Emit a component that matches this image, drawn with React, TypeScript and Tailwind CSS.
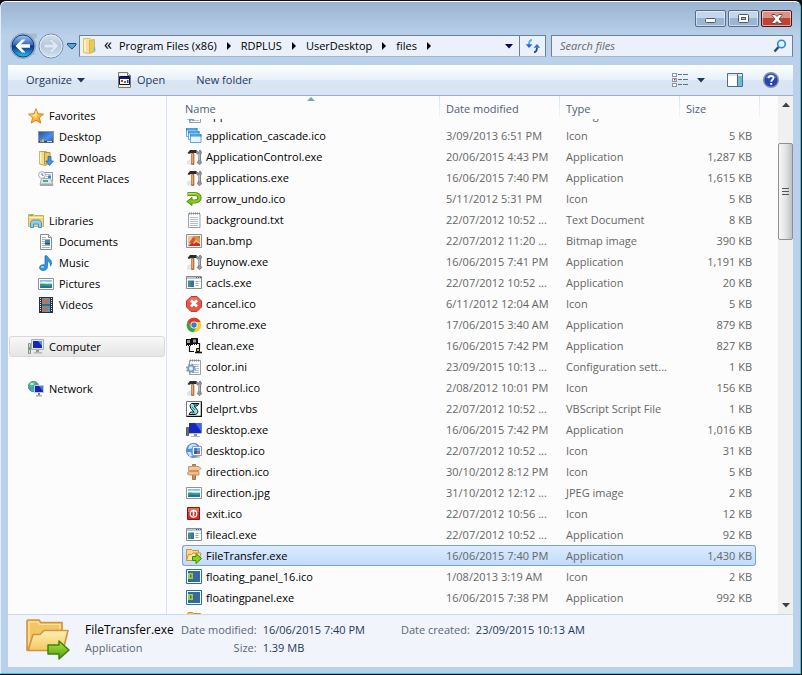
import React, { useLayoutEffect, useRef } from 'react';
import clsx from 'clsx';

function Svg({ size = 16, box = 16, children }: { size?: number; box?: number; children: React.ReactNode }) {
  return (
    <svg width={size} height={size} viewBox={`0 0 ${box} ${box}`} className="shrink-0" aria-hidden="true">
      {children}
    </svg>
  );
}

// ---- navigation pane icons ----

const StarIcon = () => (
  <Svg>
    <defs>
      <linearGradient id="star" x1="0" y1="0" x2="1" y2="1">
        <stop offset="0" stopColor="#fff3a0" />
        <stop offset="0.5" stopColor="#ffc23a" />
        <stop offset="1" stopColor="#f08a10" />
      </linearGradient>
    </defs>
    <path d="M8 .8l2 5 5.500.3-4.200 3.600 1.500 5.400L8 12.200l-4.800 2.900 1.500-5.400L.5 6.100 6 5.800z" fill="url(#star)" stroke="#e8791c" strokeLinejoin="round" />
    <path d="M8 3v7M5 7l3 1" stroke="#fff6bd" strokeWidth=".8" fill="none" />
  </Svg>
);

const DesktopIcon = () => (
  <Svg>
    <defs>
      <linearGradient id="desk" x1="0" y1="0" x2="1" y2="1">
        <stop offset="0" stopColor="#1f4ea8" />
        <stop offset="0.6" stopColor="#4d8fe6" />
        <stop offset="1" stopColor="#1c55b8" />
      </linearGradient>
    </defs>
    <rect x=".5" y="2.500" width="15" height="11" fill="url(#desk)" stroke="#8c96a4" />
    <path d="M1 12h14v1.500H1z" fill="#2a3a55" />
    <path d="M2 10h2v1.500H2z" fill="#e8502c" />
    <path d="M4 10h2v1.500H4z" fill="#7fc23c" />
    <path d="M2 11.500h2V13H2z" fill="#44b4f0" />
    <path d="M4 11.500h2V13H4z" fill="#f8c830" />
    <path d="M9 12.500h5" stroke="#c8d4e4" />
  </Svg>
);

const DownloadsIcon = () => (
  <Svg>
    <path d="M1.500 1.500h7l1 1V14l-2 1.500-6-1.500z" fill="#f5dc8a" stroke="#c8a44c" />
    <path d="M6.500 2.500h5.500V14H6.500z" fill="#eccb62" stroke="#b8923a" />
    <path d="M2.500 2.500v11" stroke="#fff4c4" strokeWidth="1.500" />
    <path d="M10 6.500h3V11h2.300l-3.800 4.500L7.700 11H10z" fill="#3f9be8" stroke="#1f68b4" strokeWidth=".8" />
  </Svg>
);

const RecentIcon = () => (
  <Svg>
    <path d="M6.500 1.500h8v9h-8z" fill="#f4f8fc" stroke="#8f9aa6" />
    <path d="M8 3.500h5M8 5.500h2" stroke="#b4c0cc" />
    <path d="M10 4.500h3v3h-3z" fill="#3e86d0" />
    <path d="M3.500 7.500h9l2.500 6H2z" fill="#e2e6ea" stroke="#a3aab0" />
    <path d="M5 9h5v2H5z" fill="#4aa884" />
    <path d="M2 12.500h13V15H2z" fill="#a3a9ae" />
    <circle cx="4" cy="4" r="3.400" fill="#fbfdff" stroke="#a5b0ba" />
    <path d="M4 2v2.200h1.700" stroke="#4c5866" strokeWidth=".8" fill="none" />
  </Svg>
);

const LibrariesIcon = () => (
  <Svg>
    <path d="M.5 3.500v-2h5l1.500 1h8.500v11H.5z" fill="#f2d67c" stroke="#cfae5a" />
    <path d="M1.500 2.500h3.500" stroke="#6db33f" />
    <path d="M1 4.500h14" stroke="#fff2b8" />
    <path d="M2.500 14.500v-5l2-2.500h7l2 2.500v5h-3v-3.500h-5v3.500z" fill="#8fd0f0" stroke="#4595c8" />
  </Svg>
);

const DocumentsIcon = () => (
  <Svg>
    <path d="M2.500.500h8l3 3v12h-11z" fill="#fff" stroke="#838c96" />
    <path d="M10.500.500v3h3" fill="#e0e6ee" stroke="#838c96" />
    <path d="M4 3.500h4M4 5.500h8M4 7.500h3M4 9.500h3M4 11.500h8M4 13.500h8" stroke="#9fb0c4" />
    <path d="M7 6h5v4.500H7z" fill="#3f7fc4" />
    <path d="M7 9h5v1.500H7z" fill="#204c7c" />
  </Svg>
);

const MusicIcon = () => (
  <Svg>
    <path d="M7 .8h2c.2 2.500 4.500 3 4.500 7.200 0 1.500-.6 2.500-1 3 .4-2.800-1.500-4.200-3-4.800v5.300c0 2.400-1.800 4-4.300 4-2.200 0-3.700-1.200-3.700-2.800 0-2.200 2.800-3.700 5.500-2.700z" fill="#2d96e0" stroke="#176cb2" strokeWidth=".7" />
    <ellipse cx="4.500" cy="12" rx="1.600" ry=".9" fill="#9bd8fa" />
  </Svg>
);

const PictureIcon = () => (
  <Svg>
    <path d="M.5 2.500h15v11H.5z" fill="#fff" stroke="#8a949e" />
    <path d="M2 4h12v8H2z" fill="#7cc4ec" />
    <path d="M2 6.500c3-2 5 0 12-1v2H2z" fill="#e4f4fc" />
    <path d="M2 8c3-1 5 1 12 0v4H2z" fill="#3f9464" />
    <path d="M2 11c4-2 7 0 12-1v2H2z" fill="#1e6db0" />
  </Svg>
);

const VideosIcon = () => (
  <Svg>
    <path d="M1 0h14v16H1z" fill="#2c3034" />
    <path d="M4 1h8v6.500H4zM4 8.500h8V15H4z" fill="#4a9ed4" />
    <path d="M5 1l3 2 3-2v4L8 7 4 4zM5 9l3 2 3-2-1 4-5 2z" fill="#d06a3c" />
    <path d="M2.500 1v14M13.500 1v14" stroke="#e4e8ea" strokeDasharray="1 1" />
  </Svg>
);

const ComputerIcon = () => (
  <Svg>
    <path d="M.5 4.500h2v10h-2z" fill="#d4d8d4" stroke="#8a9290" />
    <path d="M1.500 8v3" stroke="#58b040" />
    <path d="M3.500.500h12v10h-12z" fill="#e3e7ec" stroke="#a8aeb6" />
    <path d="M5 2h9v7H5z" fill="#1626bc" />
    <path d="M10 2h4v5z" fill="#5f8df0" />
    <path d="M8 11h3v2H8z" fill="#8d949c" />
    <path d="M6 13h8v1.500H6z" fill="#b0b6bc" />
  </Svg>
);

const NetworkIcon = () => (
  <Svg>
    <circle cx="5.500" cy="5.500" r="5.200" fill="#3f9ae4" stroke="#2468b0" strokeWidth=".6" />
    <path d="M3 1l4-.5 1 2-3 2-1 2-3-1zM2 8l3 0 1 2-1 .500zM8 3l2 1-2 1z" fill="#5cc04c" />
    <ellipse cx="4" cy="3" rx="2" ry="1" fill="#e4faff" opacity=".8" />
    <path d="M6.500 4.500h9v7h-9z" fill="#1424b4" stroke="#c4cad4" />
    <path d="M11 5h4v5z" fill="#4a76ec" />
    <path d="M10 12h2v2h-2z" fill="#7c848c" />
    <path d="M8 14h6v1.500H8z" fill="#a4acb4" />
  </Svg>
);

// ---- file icons ----

const CascadeIcon = () => (
  <Svg>
    {[[0, 0], [2, 3], [4, 6]].map(([x, y]) => (
      <g key={x} transform={`translate(${x} ${y})`}>
        <path d="M.5.500h10.500v8H.5z" fill="#eaf5fd" stroke="#62aadc" />
        <path d="M0 0h11.500v2.500H0z" fill="#2c8ed2" />
        <path d="M1 1h9" stroke="#7cc6f2" strokeWidth=".8" />
      </g>
    ))}
  </Svg>
);

const ToolsIcon = () => (
  <Svg>
    <path d="M1 12l4-2v5.500H1z" fill="#d9dadb" opacity=".7" />
    <path d="M1.500 4L4 1h6.500v3H5L3 5z" fill="#2b2c2e" />
    <path d="M5.500 4.500h2.500v11H5.500z" fill="#c98648" stroke="#935424" strokeWidth=".6" />
    <path d="M6.300 5v9" stroke="#f1c392" strokeWidth=".8" />
    <path d="M10.500 1.500l2 2 1.500-2.500 1.500 2-1 3v5l1 3-2 1.500-2-1.500 1-3V6l-2-2z" fill="#969ba1" stroke="#5d6267" strokeWidth=".7" />
    <path d="M13 5v6" stroke="#dde1e4" strokeWidth=".8" />
  </Svg>
);

const UndoIcon = () => (
  <Svg>
    <path d="M1.500 3h7.500c6 0 6 7.500 0 7.500H6" fill="none" stroke="#4c8c0c" strokeWidth="4.200" />
    <path d="M6 6.500v8L.8 10.500z" fill="#7dbd16" stroke="#4c8c0c" />
    <path d="M2 3h7c6 0 6 7.500 0 7.500H5" fill="none" stroke="#8ccb20" strokeWidth="2.400" />
    <path d="M2 2.500h8" stroke="#c3ea6c" strokeWidth=".8" />
  </Svg>
);

const TextIcon = () => (
  <Svg>
    <path d="M2.500 1.500h11l.5.500v13.500H2.500z" fill="#fbfcfd" stroke="#9aa2aa" />
    <path d="M3 1.500h11" stroke="#7f8890" strokeDasharray="1 1" strokeWidth="2" />
    <path d="M4 5.500h8M4 7.500h8M4 9.500h8M4 11.500h8M4 13.500h8" stroke="#b6bec6" />
  </Svg>
);

const BitmapIcon = () => (
  <Svg>
    <path d="M.5 1.500h15v13H.5z" fill="#f4f4f2" stroke="#8d9092" />
    <path d="M2 3h12v10H2z" fill="#e6c89c" />
    <path d="M3 10l4-6h4l-4 7z" fill="#e2502c" />
    <path d="M7 3h4l3 3v4L9 6z" fill="#f08848" />
    <path d="M2 13l4-3 2 1 2-2 4 2v2z" fill="#c4311c" />
    <path d="M11 3h3v3z" fill="#6c9c48" />
  </Svg>
);

const ConsoleIcon = () => (
  <Svg>
    <path d="M.5 1.500h15v12H.5z" fill="#fdfdfd" stroke="#868d94" />
    <path d="M1 2h14v2H1z" fill="#bcc6d0" />
    <path d="M10 2.500h1m1 0h1m1 0h1" stroke="#3c5f9c" />
    <path d="M2 5.500h3V12H2z" fill="#3f9478" />
    <path d="M5 5.500h3V12H5z" fill="#3b70a8" />
    <path d="M9.500 6.500h3M9.500 8.500h3M9.500 10.500h3M13.500 6.500h1" stroke="#9ca6b0" />
  </Svg>
);

const CancelIcon = () => (
  <Svg>
    <path d="M5 .500h6L15.500 5v6L11 15.500H5L.5 11V5z" fill="#e4574a" stroke="#c43a30" />
    <path d="M5.500 1.500h5l3.500 4H2z" fill="#f0887a" opacity=".6" />
    <path d="M5 4.500l6 6M11 4.500l-6 6" stroke="#fff" strokeWidth="2.600" />
  </Svg>
);

const ChromeIcon = () => (
  <Svg>
    <circle cx="8" cy="8" r="7.300" fill="#f7cf2d" />
    <path d="M1.700 4.300A7.300 7.300 0 0 1 14.600 5H8L5 9.500z" fill="#dc3b2c" />
    <path d="M1.700 4.300A7.300 7.300 0 0 0 7.500 15.300L10.800 9.700 8 11.300 5 9.700z" fill="#34a24a" />
    <circle cx="8" cy="8" r="3.500" fill="#fff" />
    <circle cx="8" cy="8" r="2.700" fill="#3c79d4" />
  </Svg>
);

const CleanIcon = () => (
  <Svg>
    <path d="M0 1h6v6H0zM5 0h7v6H5z" fill="#111" />
    <path d="M1 2h3v3H1zM7 1.500h3v3H7z" fill="#9a9a90" />
    <path d="M3.500 8v5.500H8M11 5.500h2.500V11" fill="none" stroke="#111" strokeWidth="1.200" />
    <path d="M0 7.500h6M6 6.500h6" stroke="#111" strokeDasharray="1 1" />
    <path d="M10.500 10.500h3v3h-3z" fill="#c8b424" stroke="#111" />
    <path d="M9 14.500h7" stroke="#111" strokeWidth="1.600" />
  </Svg>
);

const IniIcon = () => (
  <Svg>
    <path d="M3.500 1.500h11v14h-11z" fill="#fbfcfd" stroke="#98a0a8" />
    <path d="M4 1.500h10" stroke="#7f8890" strokeDasharray="1 1" strokeWidth="2" />
    <path d="M6 5.500h7M9 7.500h4M10 9.500h3M9 11.500h4M6 13.500h7" stroke="#b9c1c8" />
    <circle cx="5" cy="9.500" r="3" fill="#cfe2f2" stroke="#7696b4" strokeWidth="1.600" />
    <circle cx="5" cy="9.500" r="4.300" fill="none" stroke="#7696b4" strokeWidth="1.400" strokeDasharray="1.700 1.670" />
    <circle cx="5" cy="9.500" r="1" fill="#fff" />
  </Svg>
);

const ScriptIcon = () => (
  <Svg>
    <path d="M.5.500h15v15H.5z" fill="#fff" stroke="#777" />
    <path d="M.5 15.500h15V.5" stroke="#111" strokeWidth="1.500" fill="none" />
    <path d="M5.500 2.500h7.500L11 5H8l3 3.500c2 2.500 0 5-2 5H3l1.500-2.500H8L5 7.500c-1.500-2-1-4 .5-5z" fill="#8de2e4" stroke="#111" />
    <path d="M7 3.500h4M6 6l3 3M6 12h3" stroke="#128e98" />
  </Svg>
);

const MonitorIcon = () => (
  <Svg>
    <path d="M.5 5.500h2v8h-2z" fill="#666c72" stroke="#555c62" />
    <path d="M3 1h12.500v10H3z" fill="#1428bc" />
    <path d="M9 1h6.500v9z" fill="#3e64ea" />
    <path d="M3 11h12.500v1H3z" fill="#b4bcc8" />
    <path d="M8 12h3v2H8z" fill="#8a9098" />
    <path d="M5 14h9v1H5z" fill="#acb2b8" />
  </Svg>
);

const DesktopGlobeIcon = () => (
  <Svg>
    <circle cx="7.500" cy="7.500" r="7.200" fill="#4d90e6" stroke="#3a72c8" strokeWidth=".6" />
    <path d="M3 3c3-3 7-2 8 0-2 1-6 3-9 3zM1 9h4l1 4-2 1z" fill="#cbe6ff" />
    <path d="M6.500 3.500h9v9h-9z" fill="#fff" stroke="#7ba0cc" />
    <path d="M8 5h3v3H8z" fill="#3a80d4" />
    <path d="M11 5h3v3h-3z" fill="#62a8ee" />
    <path d="M11 8h3v3h-3z" fill="#e35438" />
    <path d="M8 8h3v3H8z" fill="#2460b4" />
    <path d="M8 14h6" stroke="#8ca0b8" />
  </Svg>
);

const SignpostIcon = () => (
  <Svg>
    <path d="M6.500.500h3v15h-3z" fill="#c98f5c" stroke="#94603a" strokeWidth=".8" />
    <path d="M2.500 2.500H13l2 2-2 2H2.500z" fill="#f3c79a" stroke="#c99464" />
    <path d="M3 7.500h10v3.500H3L1 9.250z" fill="#efbb88" stroke="#c99464" />
  </Svg>
);

const ExitIcon = () => (
  <Svg>
    <path d="M1.500 1.500h12v12h-12z" fill="#d42a20" stroke="#8e1410" />
    <path d="M2 2h11v4H2z" fill="#ea6a54" />
    <circle cx="7.500" cy="7.800" r="3.300" fill="none" stroke="#fff" strokeWidth="1.300" />
    <path d="M7.500 5v5" stroke="#fff" strokeWidth="1.600" />
  </Svg>
);

const TransferIcon = () => (
  <Svg>
    <path d="M.5 12.500V1.500h5l1 1h6v3" fill="#f6d688" stroke="#cb9440" />
    <path d="M.5 12.500l2-6h3l1.500-1.500h8l-2 7.500z" fill="#fbe6a4" stroke="#cb9440" />
    <path d="M6.500 8.500h3.500v-3l5.500 5-5.500 5v-3H6.500z" fill="#8cd020" stroke="#3e8a08" />
  </Svg>
);

const TransferLargeIcon = () => (
  <Svg size={44} box={44}>
    <defs>
      <linearGradient id="fold" x1="0" y1="0" x2="0" y2="1">
        <stop offset="0" stopColor="#fdf0b4" />
        <stop offset="1" stopColor="#f2c860" />
      </linearGradient>
      <linearGradient id="garrow" x1="0" y1="0" x2="0" y2="1">
        <stop offset="0" stopColor="#b4e440" />
        <stop offset="1" stopColor="#4c9c0c" />
      </linearGradient>
    </defs>
    <path d="M1 31V2q0-1 1-1h11l2 2.500h21V31z" fill="#f3c564" stroke="#cf9440" strokeWidth="1.600" />
    <path d="M3 29V3h9l2 2.500h20V10" fill="none" stroke="#fde7a8" strokeWidth="1.200" />
    <path d="M2 31.500L7 15.500h7l4-4h24l-5 20z" fill="url(#fold)" stroke="#cf9440" strokeWidth="1.600" strokeLinejoin="round" />
    <path d="M22 26h11v-4l10 9-10 9v-5H22z" fill="url(#garrow)" stroke="#3e8208" strokeWidth="1.500" strokeLinejoin="round" />
  </Svg>
);

const PanelIcon = () => (
  <Svg>
    <path d="M.5.500h15v14H.5z" fill="#fff" stroke="#1678b0" />
    <path d="M2 2h12v11H2z" fill="#3868a4" />
    <path d="M2 4h5v6H2z" fill="#a4cf3c" />
    <path d="M4 5.500h1.500v3H4z" fill="#4c7c20" />
  </Svg>
);

const FolderIcon = () => (
  <Svg>
    <path d="M1.500 14.500v-12l1-1h4l1 1h7v12z" fill="#f0c434" stroke="#c0962c" />
    <path d="M2 4.500h12" stroke="#fff0a4" />
  </Svg>
);

const FolderSideIcon = () => (
  <Svg>
    <path d="M1.500.500h6.500l1.500 1V14l-3 1.500-5-1z" fill="#f7e096" stroke="#dcc070" />
    <path d="M7.500 2.500l5-1v12l-5 2z" fill="#ecc95c" stroke="#d8b456" />
    <path d="M3 1.500v12" stroke="#fff9d8" strokeWidth="1.400" />
    <path d="M12.500 9.500v4" stroke="#6cb8e8" strokeWidth="1.600" />
  </Svg>
);

const OpenAppIcon = () => (
  <Svg>
    <path d="M1.500.500h9l3 3v12h-12z" fill="#f3f1e6" stroke="#777" />
    <path d="M10.500.500v3h3" fill="#fff" stroke="#777" />
    <path d="M2.500 4.500h10v8h-10z" fill="#fff" stroke="#111" />
    <path d="M3 5h9v2H3z" fill="#1414a4" />
    <path d="M4 8h2v2H4z" fill="#d83020" />
    <path d="M7 9h2v2H7z" fill="#20a030" />
    <path d="M10 8h1.500v3H10z" fill="#2440c8" />
  </Svg>
);

function Caret({ className }: { className?: string }) {
  return (
    <svg width="8" height="5" viewBox="0 0 8 5" className={clsx('shrink-0', className)} aria-hidden="true">
      <path d="M0 0h8L4 4.500z" fill="currentColor" />
    </svg>
  );
}

function CrumbArrow() {
  return (
    <svg width="6" height="8" viewBox="0 0 6 8" className="shrink-0" aria-hidden="true">
      <path d="M1 0l4 4-4 4z" fill="#000" />
    </svg>
  );
}

// ---- data ----

type FileRow = {
  name: string;
  date: string;
  type: string;
  size: string;
  icon: React.ComponentType;
};

const SELECTED = 'FileTransfer.exe';

const files: FileRow[] = [
  { name: 'App.ini', date: '22/07/2012 10:52 ...', type: 'Configuration sett...', size: '1 KB', icon: IniIcon },
  { name: 'application_cascade.ico', date: '3/09/2013 6:51 PM', type: 'Icon', size: '5 KB', icon: CascadeIcon },
  { name: 'ApplicationControl.exe', date: '20/06/2015 4:43 PM', type: 'Application', size: '1,287 KB', icon: ToolsIcon },
  { name: 'applications.exe', date: '16/06/2015 7:40 PM', type: 'Application', size: '1,615 KB', icon: ToolsIcon },
  { name: 'arrow_undo.ico', date: '5/11/2012 5:31 PM', type: 'Icon', size: '5 KB', icon: UndoIcon },
  { name: 'background.txt', date: '22/07/2012 10:52 ...', type: 'Text Document', size: '8 KB', icon: TextIcon },
  { name: 'ban.bmp', date: '22/07/2012 11:20 ...', type: 'Bitmap image', size: '390 KB', icon: BitmapIcon },
  { name: 'Buynow.exe', date: '16/06/2015 7:41 PM', type: 'Application', size: '1,191 KB', icon: ToolsIcon },
  { name: 'cacls.exe', date: '22/07/2012 10:52 ...', type: 'Application', size: '20 KB', icon: ConsoleIcon },
  { name: 'cancel.ico', date: '6/11/2012 12:04 AM', type: 'Icon', size: '5 KB', icon: CancelIcon },
  { name: 'chrome.exe', date: '17/06/2015 3:40 AM', type: 'Application', size: '879 KB', icon: ChromeIcon },
  { name: 'clean.exe', date: '16/06/2015 7:42 PM', type: 'Application', size: '827 KB', icon: CleanIcon },
  { name: 'color.ini', date: '23/09/2015 10:13 ...', type: 'Configuration sett...', size: '1 KB', icon: IniIcon },
  { name: 'control.ico', date: '2/08/2012 10:01 PM', type: 'Icon', size: '156 KB', icon: ToolsIcon },
  { name: 'delprt.vbs', date: '22/07/2012 10:52 ...', type: 'VBScript Script File', size: '1 KB', icon: ScriptIcon },
  { name: 'desktop.exe', date: '16/06/2015 7:42 PM', type: 'Application', size: '1,016 KB', icon: MonitorIcon },
  { name: 'desktop.ico', date: '22/07/2012 10:52 ...', type: 'Icon', size: '31 KB', icon: DesktopGlobeIcon },
  { name: 'direction.ico', date: '30/10/2012 8:12 PM', type: 'Icon', size: '5 KB', icon: SignpostIcon },
  { name: 'direction.jpg', date: '31/10/2012 12:12 ...', type: 'JPEG image', size: '2 KB', icon: PictureIcon },
  { name: 'exit.ico', date: '22/07/2012 10:56 ...', type: 'Icon', size: '12 KB', icon: ExitIcon },
  { name: 'fileacl.exe', date: '22/07/2012 10:52 ...', type: 'Application', size: '92 KB', icon: ConsoleIcon },
  { name: 'FileTransfer.exe', date: '16/06/2015 7:40 PM', type: 'Application', size: '1,430 KB', icon: TransferIcon },
  { name: 'floating_panel_16.ico', date: '1/08/2013 3:19 AM', type: 'Icon', size: '2 KB', icon: PanelIcon },
  { name: 'floatingpanel.exe', date: '16/06/2015 7:38 PM', type: 'Application', size: '992 KB', icon: PanelIcon },
  { name: 'folder.ico', date: '22/07/2012 10:52 ...', type: 'Icon', size: '5 KB', icon: FolderIcon },
];

type NavGroup = {
  label: string;
  icon: React.ComponentType;
  active?: boolean;
  items?: { label: string; icon: React.ComponentType }[];
};

const navGroups: NavGroup[] = [
  {
    label: 'Favorites',
    icon: StarIcon,
    items: [
      { label: 'Desktop', icon: DesktopIcon },
      { label: 'Downloads', icon: DownloadsIcon },
      { label: 'Recent Places', icon: RecentIcon },
    ],
  },
  {
    label: 'Libraries',
    icon: LibrariesIcon,
    items: [
      { label: 'Documents', icon: DocumentsIcon },
      { label: 'Music', icon: MusicIcon },
      { label: 'Pictures', icon: PictureIcon },
      { label: 'Videos', icon: VideosIcon },
    ],
  },
  { label: 'Computer', icon: ComputerIcon, active: true },
  { label: 'Network', icon: NetworkIcon },
];

const crumbs = ['Program Files (x86)', 'RDPLUS', 'UserDesktop', 'files'];

// ---- window parts ----

function TitleBar() {
  const base = 'flex h-[17px] w-[31px] items-center justify-center rounded-[2px] border shadow-[inset_0_0_0_1px_rgba(255,255,255,0.5)]';
  const blue = 'border-[#586c88] bg-linear-to-b from-[#c3d6eb] from-50% to-[#9bb6d3] to-50%';
  return (
    <div className="flex h-[31px] shrink-0 items-start justify-end gap-[2px] pt-2 pr-px">
      <button aria-label="Minimize" className={clsx(base, blue)}>
        <svg width="12" height="6" viewBox="0 0 12 6" className="mt-1">
          <rect x=".5" y=".5" width="10" height="4" rx="1" fill="#fff" stroke="#535666" />
        </svg>
      </button>
      <button aria-label="Maximize" className={clsx(base, blue)}>
        <svg width="12" height="10" viewBox="0 0 12 10">
          <rect x=".5" y=".5" width="10" height="8" rx="1" fill="#fff" stroke="#535666" />
          <rect x="3.500" y="3.500" width="4" height="2" fill="#a8c0dc" stroke="#535666" />
        </svg>
      </button>
      <button aria-label="Close" className={clsx(base, 'border-[#4c1520] bg-linear-to-b from-[#dd9184] from-50% to-[#bd4430] to-50%')}>
        <svg width="12" height="10" viewBox="0 0 12 10">
          <path d="M1 .500h3l2 2 2-2h3v1L8 5l3 3.500v1H8l-2-2-2 2H1v-1L4 5 1 1.500z" fill="#fff" stroke="#58505c" />
        </svg>
      </button>
    </div>
  );
}

function NavButtons() {
  return (
    <div className="flex items-center pl-px">
      <button aria-label="Back">
        <svg width="28" height="26" viewBox="0 0 28 26">
          <defs>
            <linearGradient id="back" x1="0" y1="0" x2="0" y2="1">
              <stop offset="0" stopColor="#a4c4ec" />
              <stop offset="0.45" stopColor="#3068bc" />
              <stop offset="0.5" stopColor="#06318c" />
              <stop offset="1" stopColor="#2ac0f0" />
            </linearGradient>
          </defs>
          <path d="M14 .500h14v4q-3 1-3 4v9q0 3 3 4H14z" fill="#a6bcd6" />
          <circle cx="14" cy="13" r="12.500" fill="#a3b9d3" stroke="#8da4bf" />
          <circle cx="14" cy="13" r="11" fill="url(#back)" stroke="#163c7c" />
          <path d="M6.500 13l6.500-6.500h3.500L12 11.200h9v3.600h-9l4.500 4.700H13z" fill="#fff" />
        </svg>
      </button>
      <button aria-label="Forward">
        <svg width="28" height="26" viewBox="0 0 28 26">
          <defs>
            <linearGradient id="fwd" x1="0" y1="0" x2="0" y2="1">
              <stop offset="0" stopColor="#d5e0ec" />
              <stop offset="0.5" stopColor="#b4c7dc" />
              <stop offset="1" stopColor="#d4e4f4" />
            </linearGradient>
          </defs>
          <circle cx="14" cy="13" r="12" fill="url(#fwd)" stroke="#7388a2" />
          <circle cx="14" cy="13" r="11" fill="none" stroke="#e4edf6" />
          <path d="M21.500 13L15 6.500h-3.500l4.500 4.700H7v3.600h9l-4.500 4.700H15z" fill="#dfe9f3" stroke="#b4c4d6" strokeWidth=".6" />
        </svg>
      </button>
      <button aria-label="Recent pages" className="ml-[2px]">
        <svg width="10" height="7" viewBox="0 0 10 7">
          <path d="M.5.500h8.500v1.500l-4 4-4.500-4z" fill="#5ba4d8" stroke="#1c4a80" />
        </svg>
      </button>
    </div>
  );
}

function AddressRow() {
  return (
    <div className="flex h-8 shrink-0 items-start gap-[5px]">
      <div className="flex h-[26px] w-[66px] shrink-0 items-center">
        <NavButtons />
      </div>
      <div className="mt-[2px] flex h-[22px] min-w-0 flex-1 items-stretch border border-[#6f7f93] border-b-[#a6b6c8] bg-[#eaf1fa]">
        <div className="flex min-w-0 flex-1 items-center pl-[2px]">
          <FolderSideIcon />
          <button aria-label="Show hidden folders" className="ml-[2px] h-5 w-4 pb-1 text-base leading-none">«</button>
          {crumbs.map((crumb) => (
            <span key={crumb} className="flex items-center">
              <button className="whitespace-nowrap px-[3px]">{crumb}</button>
              <span className="flex w-[18px] justify-center">
                <CrumbArrow />
              </span>
            </span>
          ))}
          <button aria-label="Previous locations" className="mr-[6px] ml-auto text-[#00005c]">
            <Caret />
          </button>
        </div>
        <button aria-label="Refresh" className="flex w-[26px] items-center justify-center border-l border-[#6f7f93]">
          <svg width="16" height="16" viewBox="0 0 16 16">
            <path d="M7 1.800C4.500 2 4 4 4 6.500" fill="none" stroke="#42b0e8" strokeWidth="1.800" />
            <path d="M.8 6.300h6.600L4 10z" fill="#2468c4" />
            <path d="M9 14.200c2.500-.2 3-2.200 3-4.700" fill="none" stroke="#284890" strokeWidth="1.800" />
            <path d="M8.600 9.700h6.600L12 6z" fill="#2c74cc" />
          </svg>
        </button>
      </div>
      <label className="mt-[2px] flex h-[22px] w-[242px] items-center border border-[#6f7f93] border-b-[#a6b6c8] bg-[#eaf1fa] pr-[5px] pl-2">
        <input
          type="text"
          aria-label="Search files"
          placeholder="Search files"
          className="min-w-0 flex-1 bg-transparent italic outline-none placeholder:text-[#666]"
        />
        <svg width="14" height="14" viewBox="0 0 14 14" className="shrink-0">
          <path d="M1.500 12.500l4-4.500" stroke="#214a88" strokeWidth="2.400" />
          <circle cx="8.500" cy="5" r="3.800" fill="#e2f1fc" stroke="#3288cc" strokeWidth="1.600" />
        </svg>
      </label>
    </div>
  );
}

function Toolbar() {
  return (
    <div className="flex h-[31px] shrink-0 items-center border-b border-b-[#9faed0] bg-linear-to-b from-[#fdfeff] via-[#e6f0fa] via-50% to-[#dae5f4] to-52% pr-[14px] pl-[18px] text-[#1e395b]">
      <button className="flex items-center gap-[5px]">
        Organize
        <Caret />
      </button>
      <button className="ml-8 flex items-center gap-1">
        <OpenAppIcon />
        Open
      </button>
      <button className="ml-[31px]">New folder</button>
      <button aria-label="Change your view" className="ml-auto flex items-center gap-[9px]">
        <svg width="16" height="14" viewBox="0 0 16 14">
          {[0, 5, 10].map((y) => (
            <g key={y}>
              <rect x=".5" y={y + 0.5} width="4" height="3" fill="#fff" stroke="#8a97a8" />
              <path d={`M6 ${y + 1.5}h4M11 ${y + 1.5}h5`} stroke="#5c6f8a" />
            </g>
          ))}
          <path d="M2 6h1.500v1.500H2z" fill="#d83830" />
        </svg>
        <Caret />
      </button>
      <button aria-label="Show the preview pane" className="ml-[22px]">
        <svg width="16" height="14" viewBox="0 0 16 14">
          <path d="M.5.500h15v13H.5z" fill="#fff" stroke="#4c6c90" />
          <path d="M1 1h14v2H1z" fill="#dbe6f0" />
          <path d="M10 3h5v10h-5z" fill="#70bcd8" />
          <path d="M10.500 1v12" stroke="#4c6c90" />
        </svg>
      </button>
      <button aria-label="Get help" className="ml-5">
        <svg width="16" height="16" viewBox="0 0 16 16">
          <circle cx="8" cy="8" r="7.300" fill="#2746b4" stroke="#8690a4" strokeWidth="1.400" />
          <path d="M2.500 6a6 6 0 0 1 11 0z" fill="#6f92e0" opacity=".7" />
          <path d="M5.500 6.200C5.500 3 10.500 3.200 10.500 6c0 1.700-2.300 1.800-2.300 3.700" fill="none" stroke="#fff" strokeWidth="1.700" />
          <path d="M7.200 11h2v1.800h-2z" fill="#fff" />
        </svg>
      </button>
    </div>
  );
}

function NavPane() {
  return (
    <nav className="flex w-[159px] shrink-0 flex-col gap-[21px] border-r border-[#d6e5f5] bg-[#fcfcfc] px-px pt-[9px]">
      {navGroups.map(({ label, icon: Icon, active, items }) => (
        <div key={label}>
          <a
            href="#"
            className={clsx(
              'flex h-[21px] items-center gap-[5px] rounded-[3px] border pl-[18px]',
              active ? 'border-[#d9d9d9] bg-linear-to-b from-[#f8f8f8] to-[#e5e5e5]' : 'border-transparent',
            )}
          >
            <Icon />
            {label}
          </a>
          {items?.map(({ label: itemLabel, icon: ItemIcon }) => (
            <a key={itemLabel} href="#" className="flex h-[21px] items-center gap-[5px] pl-[29px]">
              <ItemIcon />
              {itemLabel}
            </a>
          ))}
        </div>
      ))}
    </nav>
  );
}

function FileList() {
  const listRef = useRef<HTMLDivElement>(null);

  // the list opens a little way down, so the first row is tucked under the header
  useLayoutEffect(() => {
    if (listRef.current) listRef.current.scrollTop = 15;
  }, []);

  const head = 'sticky top-0 z-10 h-[23px] bg-[#fcfcfc] p-0 pt-[3px] text-left font-normal text-[#4c607a]';
  const divider = 'absolute top-0 h-[22px] w-px bg-linear-to-b from-[#d5e4f3] to-[#f4f8fc]';

  return (
    <div ref={listRef} className="min-w-0 flex-1 overflow-hidden bg-[#fcfcfc] pl-[15px]">
      <table className="w-full table-fixed border-separate border-spacing-0 whitespace-nowrap">
        <colgroup>
          <col />
          <col className="w-[120px]" />
          <col className="w-[120px]" />
          <col className="w-[77px]" />
          <col className="w-[22px]" />
        </colgroup>
        <thead>
          <tr>
            <th className={head}>
              <svg width="8" height="4" viewBox="0 0 8 4" className="absolute top-px left-1/2 -translate-x-1/2">
                <path d="M0 4l4-4 4 4z" fill="#6fa6c4" />
              </svg>
              <span className="pl-[3px]">Name</span>
            </th>
            {['Date modified', 'Type', 'Size'].map((title) => (
              <th key={title} className={head}>
                <span className={clsx(divider, 'left-0')} />
                <span className="pl-[7px]">{title}</span>
              </th>
            ))}
            <td className={head}>
              <span className={clsx(divider, 'left-[3px]')} />
            </td>
          </tr>
        </thead>
        <tbody>
          {files.map(({ name, date, type, size, icon: Icon }) => {
            const cell = clsx(
              'h-[21px] overflow-hidden p-0',
              name === SELECTED && 'border-y border-[#7da2ce] bg-linear-to-b from-[#dcebfc] to-[#c1dbfc]',
            );
            return (
              <tr key={name} className="text-[#666]">
                <td className={clsx(cell, 'text-black', name === SELECTED ? 'rounded-l-[3px] border-l pl-[3px]' : 'pl-1')}>
                  <span className="flex items-center gap-1">
                    <Icon />
                    <span>{name}</span>
                  </span>
                </td>
                <td className={clsx(cell, 'pl-[7px]')}>{date}</td>
                <td className={clsx(cell, 'pl-[7px]')}>{type}</td>
                <td className={clsx(cell, 'text-right', name === SELECTED ? 'rounded-r-[3px] border-r pr-[3px]' : 'pr-1')}>
                  {size}
                </td>
              </tr>
            );
          })}
        </tbody>
      </table>
    </div>
  );
}

function Scrollbar() {
  return (
    <div className="flex w-[15px] shrink-0 flex-col bg-[#f0f0f0]">
      <button aria-label="Scroll up" className="flex h-[17px] items-center justify-center text-[#404040]">
        <Caret className="rotate-180" />
      </button>
      <div className="mt-[30px] flex h-[97px] flex-col items-center justify-center gap-[2px] rounded-[2px] border border-[#8f8f8f] bg-linear-to-r from-[#f6f6f6] via-[#e4e4e6] to-[#bfc0c4]">
        <span className="h-px w-[7px] bg-[#555]" />
        <span className="h-px w-[7px] bg-[#555]" />
        <span className="h-px w-[7px] bg-[#555]" />
      </div>
      <button aria-label="Scroll down" className="mt-auto flex h-[17px] items-center justify-center text-[#404040]">
        <Caret />
      </button>
    </div>
  );
}

function DetailsPane() {
  return (
    <footer className="flex h-[53px] shrink-0 items-start border-t border-[#c9d9ea] bg-[#f1f4fb] pt-1 pl-[18px] leading-[18px] text-[#1e395b]">
      <TransferLargeIcon />
      <div className="mt-[2px] ml-[15px] w-[96px]">
        <p className="whitespace-nowrap text-xs leading-[18px] text-black">{SELECTED}</p>
        <p className="text-[#5a6779]">Application</p>
      </div>
      <dl className="mt-[2px] grid grid-cols-[auto_auto] gap-x-[6px]">
        <dt className="text-right text-[#5a6779]">Date modified:</dt>
        <dd>16/06/2015 7:40 PM</dd>
        <dt className="text-right text-[#5a6779]">Size:</dt>
        <dd>1.39 MB</dd>
      </dl>
      <dl className="mt-[2px] ml-9 flex gap-[6px]">
        <dt className="text-[#5a6779]">Date created:</dt>
        <dd>23/09/2015 10:13 AM</dd>
      </dl>
    </footer>
  );
}

export default function App() {
  return (
    <div className="h-screen bg-[#101010] pt-px pr-px pb-px font-['Open_Sans','Noto_Sans',sans-serif] text-[11px] leading-4 text-black">
      <div className="flex h-full flex-col rounded-t-[6px] border border-t-white border-r-[#35c4e4] border-b-[#35c4e4] border-l-[#e4eef8] bg-[#b9d1ea] bg-linear-to-b from-[#9ab3d0] to-[#b9d1ea] to-[34px] px-[7px] pb-[6px]">
        <TitleBar />
        <AddressRow />
        <Toolbar />
        <main className="flex min-h-0 flex-1">
          <NavPane />
          <FileList />
          <Scrollbar />
        </main>
        <DetailsPane />
      </div>
    </div>
  );
}
